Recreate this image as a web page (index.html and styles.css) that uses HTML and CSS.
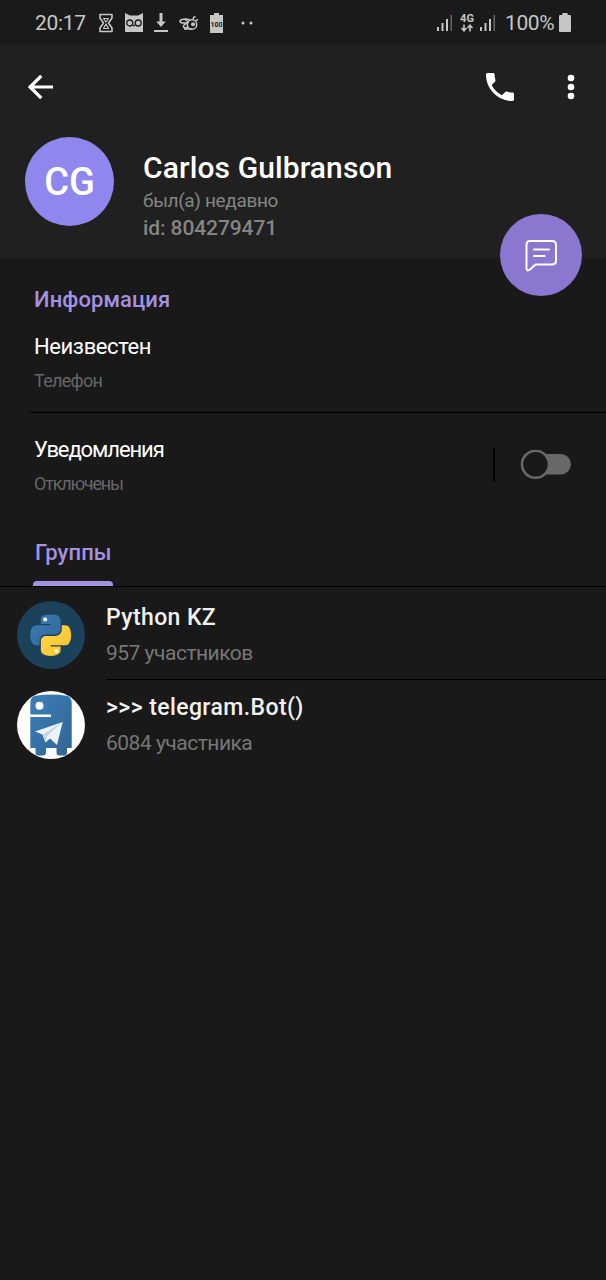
FILE: index.html
```
<!DOCTYPE html>
<html lang="ru">
<head>
    <meta charset="utf-8">
    <title>Carlos Gulbranson</title>
    <link rel="stylesheet" href="styles.css">
</head>
<body>
<div class="phone">
    <div class="status-bar"><!-- статус бар -->
        <span class="time">20:17</span>
        <svg class="st-hourglass" width="14" height="20" viewBox="0 0 14 20" fill="none" stroke="#c6c6c6" stroke-width="1.6" stroke-linejoin="round">
            <path d="M1 1.500h12v3.500L9.500 10l3.500 5v3.500H1V15l3.500-5L1 5z"/>
            <path d="M4.500 5.500h5L7 9zM7 11l2.500 4.500h-5z" stroke-width="1.200"/>
        </svg>
        <svg class="st-owl" width="18" height="20" viewBox="0 0 18 20">
            <path d="M0 0l5 2.500h8L18 0v19H0z" fill="#c6c6c6"/>
            <g fill="none" stroke="#1a1a1a" stroke-width="1.300"><circle cx="4.800" cy="10" r="3"/><circle cx="13.200" cy="10" r="3"/><path d="M8 12.500h2"/></g>
        </svg>
        <svg class="st-down" width="14" height="20" viewBox="0 0 14 20" fill="#c6c6c6">
            <path d="M5.500 0h3v8.500h3.300L7 14 2.200 8.500h3.300zM0 17h14v2H0z"/>
        </svg>
        <svg class="st-bee" width="20" height="16" viewBox="0 0 20 16" fill="none" stroke="#c6c6c6" stroke-width="1.500">
            <circle cx="13" cy="9.500" r="4.700"/>
            <circle cx="14" cy="9.300" r="2" fill="#c6c6c6" stroke="none"/>
            <path d="M11 5C7 3.500 1.500 4 1 6c-.2 2 3.300 2.500 7.500 1.800M9 7.500c-3.500 1.500-5.500 3.500-4.300 4.800s3.300.4 4.500-.8M5 14h8M14 4.500c.3-2 1-3 2.500-3M16.500 5.800l2.500-1.500M6 4.500l4 3"/>
        </svg>
        <svg class="st-batt" width="13" height="20" viewBox="0 0 13 20">
            <path d="M4 0h5v2h4v18H0V2h4z" fill="#c6c6c6"/>
            <text x="6.500" y="13.500" text-anchor="middle" class="batt-num">100</text>
        </svg>
        <svg class="st-dots" width="12" height="4" viewBox="0 0 12 4" fill="#c6c6c6"><circle cx="2" cy="2" r="1.500"/><circle cx="10" cy="2" r="1.500"/></svg>
        <div class="status-right">
            <svg class="st-signal" width="16" height="18" viewBox="0 0 16 18" fill="#c6c6c6">
                <path d="M0 13h2v4H0zM4.500 9h2v8h-2zM9 5h2v12H9z"/><path d="M13.500 1h1.500v16h-1.500z" fill="#666"/>
            </svg>
            <svg class="st-4g" width="14" height="20" viewBox="0 0 14 20">
                <text x="7" y="8.500" text-anchor="middle" class="net">4G</text>
                <path d="M4 11.500v6M1.500 15L4 17.800 6.500 15M10 18.500v-6M7.500 15L10 12.200l2.500 2.800" fill="none" stroke="#c6c6c6" stroke-width="1.600"/>
            </svg>
            <svg class="st-signal" width="16" height="18" viewBox="0 0 16 18" fill="#c6c6c6">
                <path d="M0 13h2v4H0zM4.500 9h2v8h-2zM9 5h2v12H9z"/><path d="M13.500 1h1.500v16h-1.500z" fill="#666"/>
            </svg>
            <span class="percent">100%</span>
            <svg width="12" height="19" viewBox="0 0 12 19"><path d="M4 0h4q.7 0 .7.700V2H11q1 0 1 1v15q0 1-1 1H1q-1 0-1-1V3q0-1 1-1h2.300V.7Q3.300 0 4 0z" fill="#c6c6c6"/></svg>
        </div>
    </div>

    <div class="header"><!-- шапка профиля -->
        <div class="toolbar">
            <svg class="back" width="26" height="26" viewBox="0 0 26 26" fill="none" stroke="#fff" stroke-width="3.200"><path d="M25 13H3M13.300 1.800L2.100 13l11.200 11.200"/></svg>
            <svg class="call" width="28" height="28" viewBox="3 3 18 18" fill="#fff"><path d="M6.620 10.790c1.440 2.830 3.760 5.140 6.590 6.590l2.200-2.200c.27-.27.67-.36 1.020-.24 1.120.37 2.330.57 3.570.57.55 0 1 .45 1 1V20c0 .55-.45 1-1 1-9.390 0-17-7.610-17-17 0-.55.45-1 1-1h3.500c.55 0 1 .45 1 1 0 1.250.2 2.450.57 3.570.11.35.03.740-.25 1.020l-2.200 2.200z"/></svg>
            <svg class="more" width="8" height="26" viewBox="0 0 8 26" fill="#fff"><circle cx="4" cy="4" r="3.300"/><circle cx="4" cy="13" r="3.300"/><circle cx="4" cy="22" r="3.300"/></svg>
        </div>
        <div class="profile">
            <div class="avatar">CG</div>
            <div class="user">
                <div class="name">Carlos Gulbranson</div>
                <div class="seen">был(а) недавно</div>
                <div class="uid">id: 804279471</div>
            </div>
        </div>
        <div class="fab">
            <svg width="34" height="34" viewBox="0 0 34 34" fill="none" stroke="#fff" stroke-width="2" stroke-linecap="round" stroke-linejoin="round">
                <path d="M6 3h22q4 0 4 4v15.500q0 4-4 4H11.500L6 31.500q-3.500 2.500-3.500-1.500V7q0-4 3.500-4z"/>
                <path d="M10 11.500h15M10 18h10.500" stroke-width="2.200"/>
            </svg>
        </div>
    </div>

    <div class="info"><!-- информация -->
        <div class="title">Информация</div>
        <div class="value phone-value">Неизвестен</div>
        <div class="label phone-label">Телефон</div>
    </div>
    <div class="notify">
        <div>
            <div class="value notify-value">Уведомления</div>
            <div class="label notify-label">Отключены</div>
        </div>
        <div class="toggle">
            <svg width="52" height="30" viewBox="0 0 52 30"><rect x="8" y="4" width="43" height="20.500" rx="10.250" fill="#686868"/><circle cx="15.500" cy="14.300" r="13.500" fill="#191919" stroke="#686868" stroke-width="2.600"/></svg>
        </div>
    </div>

    <div class="tabs"><div class="tab title">Группы</div></div>
    <div class="groups"><!-- список групп -->
        <div class="group">
            <svg class="pic" width="68" height="68" viewBox="0 0 68 68">
                <defs>
                    <linearGradient id="blue" x1="0" y1="0" x2="1" y2="1"><stop offset="0" stop-color="#3b7fb8"/><stop offset="1" stop-color="#316594"/></linearGradient>
                    <linearGradient id="yellow" x1="0" y1="0" x2="1" y2="1"><stop offset="0" stop-color="#ffd94b"/><stop offset="1" stop-color="#f5c02c"/></linearGradient>
                </defs>
                <circle cx="34" cy="34" r="34" fill="#1c415a"/>
                <g transform="translate(13.300 13.700) scale(.368)">
                    <path fill="url(#blue)" d="M54.900 0c-4.600 0-9 .4-12.800 1.100C30.800 3.100 28.700 7.300 28.700 15v10.200h26.800v3.400H18.600C10.800 28.600 4 33.300 1.900 42.200c-2.500 10.200-2.600 16.600 0 27.300 1.900 7.900 6.400 13.600 14.200 13.600h9.200V70.800c0-8.900 7.700-16.700 16.800-16.700h26.800c7.500 0 13.400-6.100 13.400-13.600V15c0-7.300-6.100-12.700-13.400-13.900C64.300.3 59.500 0 54.900 0z"/>
                    <path fill="url(#yellow)" d="M85.600 28.600v11.900c0 9.300-7.800 17.100-16.700 17.100H42.100c-7.300 0-13.400 6.300-13.400 13.600v25.500c0 7.300 6.300 11.500 13.400 13.600 8.500 2.500 16.600 2.900 26.800 0 6.700-2 13.400-5.900 13.400-13.600V86.500H55.500v-3.400h40.200c7.800 0 10.700-5.400 13.400-13.600 2.800-8.400 2.700-16.500 0-27.300-1.900-7.800-5.600-13.600-13.400-13.600z"/>
                    <circle cx="40.400" cy="13" r="5.500" fill="#fff"/><circle cx="70.600" cy="98.600" r="5.500" fill="#fff8d8"/>
                </g>
            </svg>
            <div class="group-text">
                <div class="group-name">Python KZ</div>
                <div class="members">957 участников</div>
            </div>
        </div>
        <div class="group">
            <svg class="pic" width="68" height="68" viewBox="0 0 68 68">
                <circle cx="34" cy="34" r="34" fill="#fff"/>
                <path d="M13.300 12Q13.300 5.500 18.500 4.800q15.500-2.500 31 0 5.200.7 5.200 7.200V57H50v4.500q0 3-3 3h-4.500q-3 0-3-3V57H29v4.500q0 3-3 3h-4.500q-3 0-3-3V57h-5.200V26H34v-2.500H13.300z" fill="url(#blue)"/>
                <circle cx="22.500" cy="14.700" r="4" fill="#fff"/>
                <path d="M18 40.500L45.700 31 40 54l-7-6.500-4.500 4-3-8z" fill="#edf3f9"/>
                <path d="M45.700 31L25.500 43.500l3 8 1.500-6.500z" fill="#c5d6e8"/>
            </svg>
            <div class="group-text">
                <div class="group-name bot">&gt;&gt;&gt; telegram.Bot()</div>
                <div class="members">6084 участника</div>
            </div>
        </div>
    </div>
</div>
</body>
</html>
```
FILE: styles.css
```
body,div,span,svg{margin:0;padding:0;box-sizing:border-box;}
body{background:#191919;font-family:Roboto,"Noto Sans",sans-serif;color:#fff;}
svg{display:block;flex:none;}
.phone{width:606px;height:1280px;overflow:hidden;background:#191919;white-space:nowrap;}

/* статус бар */
.status-bar{display:flex;align-items:center;height:45px;padding:0 35px;background:#1a1a1a;color:#c6c6c6;}
.time{width:64px;font-size:21px;letter-spacing:-0.3px;}
.st-owl{margin-left:12px;}
.st-down{margin-left:11px;}
.st-bee{margin-left:11px;}
.st-batt{margin-left:11px;}
.st-dots{margin-left:18px;}
.batt-num{font:bold 7px Roboto,sans-serif;fill:#1a1a1a;}
.net{font:bold 11px Roboto,sans-serif;fill:#c6c6c6;}
.status-right{display:flex;align-items:center;margin-left:auto;}
.st-4g{margin:0 6px 0 7px;}
.percent{width:50px;margin:0 4px 0 9px;font-size:21px;letter-spacing:-0.4px;}

/* шапка */
.header{position:relative;height:213px;background:#202020;}
.toolbar{display:flex;align-items:center;height:84px;padding:0 31px 0 28px;}
.call{margin-left:auto;}
.more{margin-left:53px;}
.profile{display:flex;padding:8px 25px 0;}
.avatar{width:89px;height:89px;border-radius:50%;background:#9087ee;font-size:38px;font-weight:500;line-height:90px;text-align:center;}
.user{margin:13px 0 0 29px;}
.name{font-size:30px;font-weight:500;line-height:36px;letter-spacing:0.1px;}
.seen{margin-top:2px;font-size:19px;line-height:26px;letter-spacing:-0.35px;color:#858585;}
.uid{font-size:21px;font-weight:500;line-height:28px;letter-spacing:-0.1px;color:#858585;}
.fab{position:absolute;right:24px;bottom:-38px;display:flex;align-items:center;justify-content:center;width:82px;height:82px;border-radius:50%;background:#8b77cf;}

/* информация */
.info{height:155px;margin-left:30px;padding:27px 0 0 4px;border-bottom:1px solid #000;}
.title{font-size:22px;font-weight:500;line-height:30px;letter-spacing:0.1px;color:#a591e2;}
.value{font-size:22px;line-height:34px;}
.phone-value{margin-top:15px;letter-spacing:-0.4px;}
.label{font-size:18px;line-height:26px;color:#666;}
.phone-label{margin-top:4px;letter-spacing:-0.7px;}
.notify{display:flex;justify-content:space-between;height:121px;padding:20px 34px 0;}
.notify-value{letter-spacing:-1.1px;}
.notify-label{margin-top:4px;letter-spacing:-1.2px;}
.toggle{display:flex;align-items:center;height:33px;margin-top:15px;padding-left:25px;border-left:2px solid #000;}

/* группы */
.tabs{height:53px;padding-left:33px;border-bottom:1px solid #000;}
.tab{display:flex;flex-direction:column;justify-content:space-between;width:80px;height:52px;padding:4px 0 0 2px;}
.tab::after{content:"";height:5px;margin-left:-2px;border-radius:4px 4px 0 0;background:#a591e2;}
.group{display:flex;height:90px;padding-left:17px;}
.pic{margin-top:14px;}
.group-text{flex:1;margin-left:21px;padding-top:14px;}
.group:first-child .group-text{height:93px;border-bottom:1px solid #000;}
.group-name{font-size:23px;font-weight:500;line-height:34px;letter-spacing:0.4px;color:#f1f1f1;}
.members{margin-top:2px;font-size:21px;line-height:32px;letter-spacing:-0.5px;color:#777;}
```
